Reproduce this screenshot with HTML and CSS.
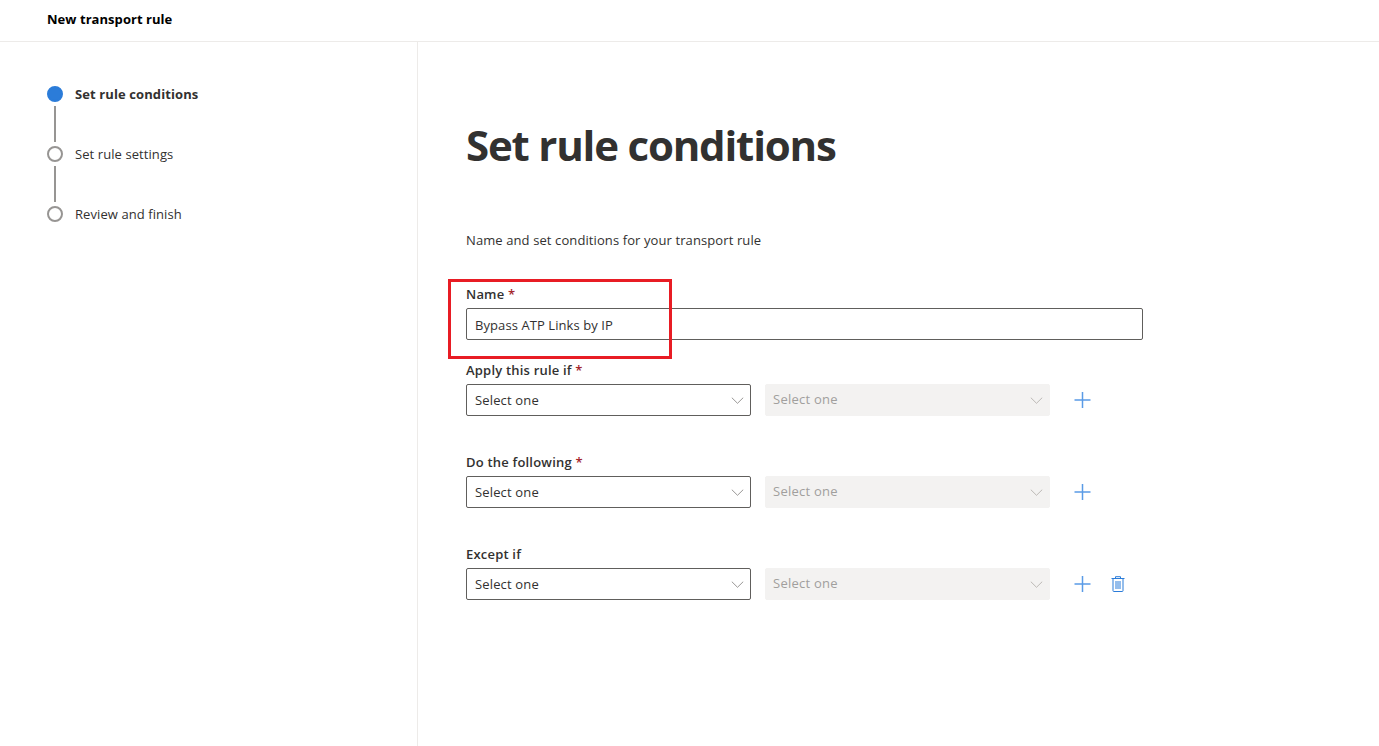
FILE: index.html
```html
<!DOCTYPE html>
<html lang="en">
<head>
<meta charset="utf-8">
<title>New transport rule</title>
<link rel="stylesheet" href="styles.css">
</head>
<body>
<header class="topbar"><span class="topbar-title">New transport rule</span></header>
<div class="layout">
  <nav class="steps">
    <div class="step step-active"><span class="dot dot-active"></span><span class="step-label">Set rule conditions</span></div>
    <div class="connector"></div>
    <div class="step"><span class="dot"></span><span class="step-label">Set rule settings</span></div>
    <div class="connector"></div>
    <div class="step"><span class="dot"></span><span class="step-label">Review and finish</span></div>
  </nav>
  <main class="content">
    <h1 class="title">Set rule conditions</h1>
    <p class="desc">Name and set conditions for your transport rule</p>
    <div class="name-field">
      <label class="label">Name <span class="req">*</span></label>
      <div class="textbox">Bypass ATP Links by IP</div>
      <div class="highlight"></div>
    </div>
    <div class="rule">
      <label class="label">Apply this rule if <span class="req">*</span></label>
      <div class="row">
        <div class="select"><span>Select one</span><svg class="chev" viewBox="0 0 14 8"><path d="M.5.8 7 7.2 13.500.8"/></svg></div>
        <div class="select select-off"><span>Select one</span><svg class="chev" viewBox="0 0 14 8"><path d="M.5.8 7 7.2 13.500.8"/></svg></div>
        <svg class="plus" viewBox="0 0 16 16"><path d="M8 0v16M0 8h16"/></svg>
      </div>
    </div>
    <div class="rule">
      <label class="label">Do the following <span class="req">*</span></label>
      <div class="row">
        <div class="select"><span>Select one</span><svg class="chev" viewBox="0 0 14 8"><path d="M.5.8 7 7.2 13.500.8"/></svg></div>
        <div class="select select-off"><span>Select one</span><svg class="chev" viewBox="0 0 14 8"><path d="M.5.8 7 7.2 13.500.8"/></svg></div>
        <svg class="plus" viewBox="0 0 16 16"><path d="M8 0v16M0 8h16"/></svg>
      </div>
    </div>
    <div class="rule">
      <label class="label">Except if</label>
      <div class="row">
        <div class="select"><span>Select one</span><svg class="chev" viewBox="0 0 14 8"><path d="M.5.8 7 7.2 13.500.8"/></svg></div>
        <div class="select select-off"><span>Select one</span><svg class="chev" viewBox="0 0 14 8"><path d="M.5.8 7 7.2 13.500.8"/></svg></div>
        <svg class="plus" viewBox="0 0 16 16"><path d="M8 0v16M0 8h16"/></svg>
        <svg class="trash" viewBox="0 0 14 16"><path d="M.5 2.500h13M4.500 2.500V.7h5v1.800M2 2.500v12.300q0 .7.700.7h8.600q.7 0 .7-.7V2.500M5 5v8M7 5v8M9 5v8"/></svg>
      </div>
    </div>
  </main>
</div>
</body>
</html>
```
FILE: styles.css
```css
* { box-sizing: border-box; }
html, body { margin: 0; height: 100%; }
body {
  background: #fff;
  color: #323130;
  font-family: "Open Sans", "Noto Sans", "Liberation Sans", sans-serif;
  font-size: 13px;
  overflow: hidden;
}
.topbar {
  height: 42px;
  border-bottom: 1px solid #edebe9;
  padding: 10px 0 0 47px;
  line-height: 18px;
}
.topbar-title { font-weight: 700; color: #000; letter-spacing: 0.05px; }
.layout { display: flex; height: 704px; }
.steps {
  width: 418px;
  flex: none;
  border-right: 1px solid #edebe9;
  padding: 44px 0 0 47px;
}
.step { display: flex; align-items: center; height: 16px; gap: 12px; }
.step-label { letter-spacing: 0.08px; }
.step-active .step-label { font-weight: 700; letter-spacing: 0.1px; }
.dot {
  width: 16px;
  height: 16px;
  border-radius: 50%;
  border: 2px solid #979593;
  flex: none;
}
.dot-active { background: #2b7cd9; border-color: #2b7cd9; }
.connector { width: 2px; height: 36px; margin: 4px 0 4px 7px; background: #979593; }
.content { flex: 1; padding: 0 0 0 48px; }
.title {
  margin: 76px 0 0;
  font-size: 42px;
  line-height: 54px;
  font-weight: 700;
  letter-spacing: -1.2px;
  color: #323130;
}
.desc { margin: 59px 0 0; line-height: 18px; letter-spacing: 0.1px; }
.name-field { position: relative; margin-top: 36px; height: 69px; }
.label { display: block; height: 23px; line-height: 18px; font-weight: 600; letter-spacing: 0.2px; }
.req { color: #a4262c; }
.textbox {
  width: 677px;
  height: 32px;
  border: 1px solid #605e5c;
  border-radius: 2px;
  padding: 0 8px;
  line-height: 32px;
  letter-spacing: 0.08px;
}
.highlight {
  position: absolute;
  left: -18px;
  top: -6px;
  width: 224px;
  height: 80px;
  border: 3px solid #e81c24;
}
.rule { height: 92px; padding-top: 7px; }
.row { display: flex; align-items: center; }
.select {
  width: 285px;
  height: 32px;
  border: 1px solid #605e5c;
  border-radius: 2px;
  padding: 0 6px 0 8px;
  display: flex;
  align-items: center;
  justify-content: space-between;
  letter-spacing: 0.15px;
}
.select-off {
  margin-left: 14px;
  background: #f3f2f1;
  border-color: #f3f2f1;
  color: #a19f9d;
  padding-left: 7px;
}
.select-off span { position: relative; top: -1px; letter-spacing: 0.25px; }
.chev { width: 13px; height: 7px; fill: none; stroke: #8a8886; stroke-width: 1; }
.select-off .chev { stroke: #b3b0ad; }
.plus { width: 17px; height: 16px; margin-left: 24px; fill: none; stroke: #5a9be6; stroke-width: 1.500; }
.trash { width: 14px; height: 16px; margin-left: 20px; fill: none; stroke: #2b7cd9; stroke-width: 1; }
```
